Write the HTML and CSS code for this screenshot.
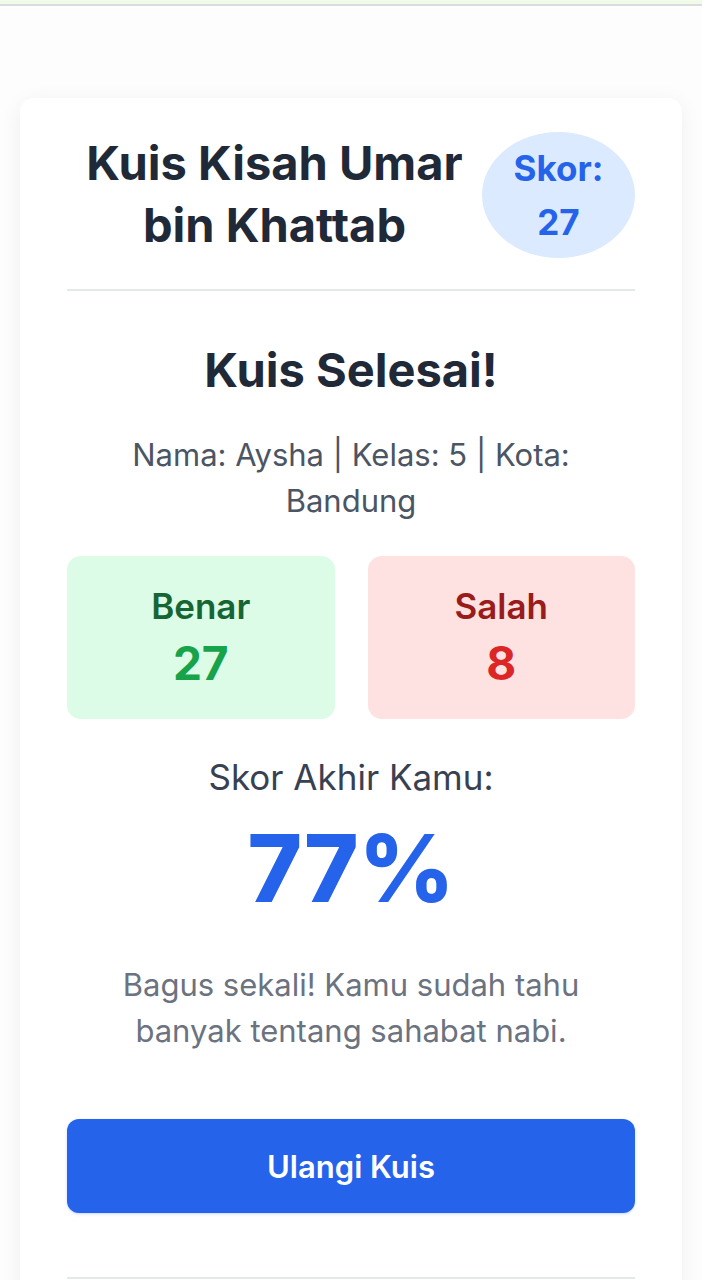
FILE: index.html
```html
<!DOCTYPE html>
<html lang="id">
<head>
<meta charset="utf-8">
<title>Kuis Kisah Umar bin Khattab</title>
<link rel="stylesheet" href="styles.css">
</head>
<body>
<div class="topbar"></div>
<main class="card">
  <header class="card-header">
    <h1 class="title">Kuis Kisah Umar bin Khattab</h1>
    <div class="badge">Skor:<br>27</div>
  </header>
  <section class="result">
    <h2 class="result-title">Kuis Selesai!</h2>
    <p class="meta">Nama: Aysha | Kelas: 5 | Kota: Bandung</p>
    <div class="stats">
      <div class="stat stat-ok">
        <div class="stat-label">Benar</div>
        <div class="stat-value">27</div>
      </div>
      <div class="stat stat-bad">
        <div class="stat-label">Salah</div>
        <div class="stat-value">8</div>
      </div>
    </div>
    <p class="final-label">Skor Akhir Kamu:</p>
    <div class="final-score">77%</div>
    <p class="message">Bagus sekali! Kamu sudah tahu banyak tentang sahabat nabi.</p>
    <button class="btn" type="button">Ulangi Kuis</button>
  </section>
  <footer class="card-footer"></footer>
</main>
</body>
</html>
```
FILE: styles.css
```css
html, body {
  margin: 0;
  padding: 0;
}
body {
  background: #fdfdfd;
  font-family: Inter, "Noto Sans", "Liberation Sans", sans-serif;
  color: #1f2937;
  overflow: hidden;
}
.topbar {
  height: 4px;
  background: #f2fbe9;
  border-bottom: 2px solid #d6dfe0;
}
.card {
  margin: 92px 20px 0;
  background: #ffffff;
  border-radius: 14px;
  box-shadow: 0 4px 22px rgba(0, 0, 0, 0.06);
  padding: 34px 47px 0;
}
.card-header {
  display: flex;
  align-items: flex-start;
  padding-bottom: 31px;
  border-bottom: 2px solid #e5e7eb;
}
.title {
  flex: 1;
  margin: 0;
  text-align: center;
  font-size: 47px;
  line-height: 62px;
  font-weight: 700;
  color: #1f2937;
}
.badge {
  width: 153px;
  height: 126px;
  border-radius: 50%;
  background: #dbeafe;
  color: #2563eb;
  font-weight: 700;
  font-size: 35px;
  line-height: 54px;
  display: flex;
  align-items: center;
  justify-content: center;
  text-align: center;
  flex-shrink: 0;
}
.result {
  display: flex;
  flex-direction: column;
  align-items: stretch;
  text-align: center;
}
.result-title {
  margin: 50px 0 0;
  font-size: 47px;
  line-height: 58px;
  font-weight: 700;
  color: #1f2937;
}
.meta {
  margin: 33px 20px 0;
  font-size: 31px;
  line-height: 46px;
  color: #4b5563;
}
.stats {
  margin-top: 32px;
  display: grid;
  grid-template-columns: 1fr 1fr;
  gap: 33px;
}
.stat {
  border-radius: 14px;
  padding: 24px 0 25px;
}
.stat-ok { background: #dcfce7; }
.stat-bad { background: #fee2e2; }
.stat-label {
  font-size: 35px;
  line-height: 52px;
  font-weight: 600;
}
.stat-value {
  font-size: 46px;
  line-height: 62px;
  font-weight: 700;
}
.stat-ok .stat-label { color: #166534; }
.stat-ok .stat-value { color: #16a34a; }
.stat-bad .stat-label { color: #991b1b; }
.stat-bad .stat-value { color: #dc2626; }
.final-label {
  margin: 35px 0 0;
  font-size: 35px;
  line-height: 46px;
  color: #374151;
}
.final-score {
  margin-top: 13px;
  font-size: 93px;
  line-height: 110px;
  font-weight: 800;
  color: #2563eb;
}
.message {
  margin: 39px 40px 0;
  font-size: 31px;
  line-height: 46px;
  color: #6b7280;
}
.btn {
  margin-top: 65px;
  height: 94px;
  border: none;
  border-radius: 12px;
  background: #2563eb;
  color: #ffffff;
  font-family: inherit;
  font-size: 31px;
  font-weight: 600;
  box-shadow: 0 1px 3px rgba(37, 99, 235, 0.25);
}
.card-footer {
  margin-top: 64px;
  height: 60px;
  border-top: 2px solid #e5e7eb;
}
```
